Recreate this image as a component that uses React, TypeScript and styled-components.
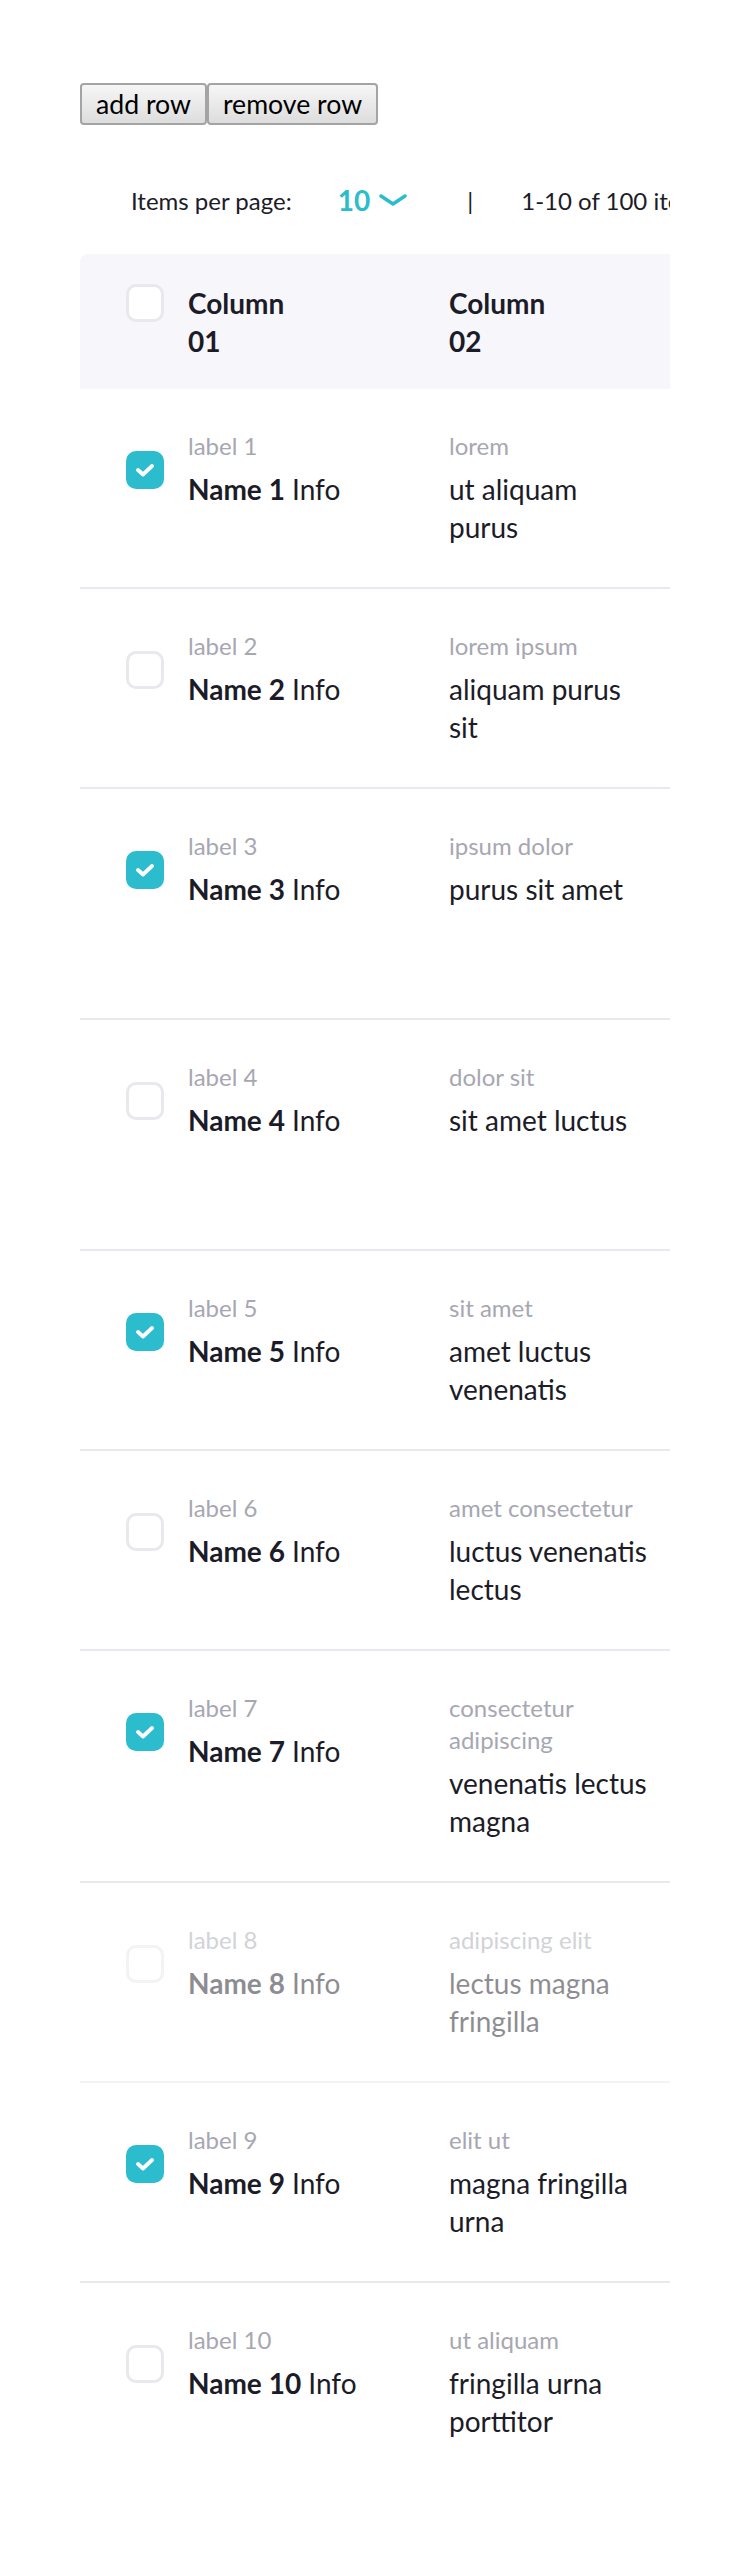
import React from "react";
import styled, { createGlobalStyle, css } from "styled-components";

const GlobalStyle = createGlobalStyle`
  html, body {
    margin: 0;
    padding: 0;
    background: #ffffff;
  }
  body {
    font-family: Lato, "Open Sans", sans-serif;
    color: #1c1c28;
  }
`;

const Page = styled.div`
  padding: 83px 80px 40px;
`;

const Actions = styled.div`
  display: flex;
`;

const ActionButton = styled.button`
  font-family: inherit;
  font-size: 26.67px;
  line-height: 32px;
  color: #000;
  padding: 3px 14px;
  border: 2px solid #a4a4a4;
  border-radius: 4px;
  background: linear-gradient(#f6f6f6, #dddddd);
  cursor: pointer;
`;

const Frame = styled.div`
  overflow: hidden;
`;

const Pager = styled.div`
  display: flex;
  align-items: center;
  height: 60px;
  margin: 45px 0 24px;
  padding-left: 51px;
  white-space: nowrap;
  font-size: 24px;
  color: #1c1c28;
`;

const PagerLabel = styled.span`
  margin-right: 46px;
`;

const PageSize = styled.span`
  display: flex;
  align-items: center;
  gap: 9px;
  font-size: 28px;
  font-weight: 700;
  color: #2bbccd;
`;

const Divider = styled.span`
  margin: 0 48px 0 60px;
  color: #1c1c28;
`;

const Table = styled.div`
  width: 900px;
`;

const rowLayout = css`
  display: flex;
  align-items: flex-start;
  box-sizing: border-box;
`;

const HeaderRow = styled.div`
  ${rowLayout};
  background: #f7f7fb;
  border-radius: 8px 8px 0 0;
  padding: 30px 0 29px;
`;

const Row = styled.div<{ $minHeight?: number; $disabled?: boolean }>`
  ${rowLayout};
  padding: 41px 0;
  border-bottom: 2px solid #e8e8ee;
  min-height: ${(p) => (p.$minHeight ? `${p.$minHeight}px` : "0")};
  opacity: ${(p) => (p.$disabled ? 0.5 : 1)};
  &:last-child {
    border-bottom: none;
  }
`;

const CheckCell = styled.div<{ $offset: number }>`
  flex: none;
  padding-left: 46px;
  margin-right: 24px;
  margin-top: ${(p) => p.$offset}px;
`;

const Box = styled.div<{ $checked: boolean }>`
  width: 38px;
  height: 38px;
  box-sizing: border-box;
  border-radius: 10px;
  display: flex;
  align-items: center;
  justify-content: center;
  ${(p) =>
    p.$checked
      ? css`
          background: #2bbccd;
          border: none;
        `
      : css`
          background: #ffffff;
          border: 3px solid #e8e8ed;
        `}
`;

const Cell = styled.div<{ $width: number }>`
  flex: none;
  width: ${(p) => p.$width}px;
  box-sizing: border-box;
`;

const CellInner = styled.div`
  width: 200px;
`;

const HeaderText = styled.div`
  font-size: 28px;
  line-height: 38px;
  font-weight: 700;
  max-width: 110px;
  color: #1c1c28;
`;

const Label = styled.div`
  font-size: 24px;
  line-height: 32px;
  color: #a7a7b2;
  margin-bottom: 8px;
`;

const Value = styled.div`
  font-size: 28px;
  line-height: 38px;
  color: #1c1c28;
`;

const Strong = styled.strong`
  font-weight: 700;
`;

const Chevron = () => (
  <svg width="28" height="12" viewBox="0 0 28 12" fill="none">
    <polyline
      points="2,2 14,10 26,2"
      stroke="#2bbccd"
      strokeWidth="3.5"
      strokeLinecap="round"
      strokeLinejoin="round"
    />
  </svg>
);

const CheckMark = () => (
  <svg width="20" height="14" viewBox="0 0 20 14" fill="none">
    <polyline
      points="3,7 8,11.5 17,3"
      stroke="#ffffff"
      strokeWidth="3.8"
      strokeLinecap="round"
      strokeLinejoin="round"
    />
  </svg>
);

type Item = {
  n: number;
  checked: boolean;
  disabled?: boolean;
  label2: string;
  value2: string;
  label3: string;
  value3: string;
  minHeight?: number;
};

const rows: Item[] = [
  { n: 1, checked: true, label2: "lorem", value2: "ut aliquam purus", label3: "ipsum", value3: "dolor" },
  { n: 2, checked: false, label2: "lorem ipsum", value2: "aliquam purus sit", label3: "dolor", value3: "sit" },
  { n: 3, checked: true, label2: "ipsum dolor", value2: "purus sit amet", label3: "sit", value3: "amet", minHeight: 231 },
  { n: 4, checked: false, label2: "dolor sit", value2: "sit amet luctus", label3: "amet", value3: "luctus", minHeight: 231 },
  { n: 5, checked: true, label2: "sit amet", value2: "amet luctus venenatis", label3: "luctus", value3: "venenatis" },
  { n: 6, checked: false, label2: "amet consectetur", value2: "luctus venenatis lectus", label3: "venenatis", value3: "lectus" },
  { n: 7, checked: true, label2: "consectetur adipiscing", value2: "venenatis lectus magna", label3: "lectus", value3: "magna" },
  { n: 8, checked: false, disabled: true, label2: "adipiscing elit", value2: "lectus magna fringilla", label3: "magna", value3: "fringilla" },
  { n: 9, checked: true, label2: "elit ut", value2: "magna fringilla urna", label3: "fringilla", value3: "urna" },
  { n: 10, checked: false, label2: "ut aliquam", value2: "fringilla urna porttitor", label3: "urna", value3: "porttitor" },
];

export default function App() {
  return (
    <>
      <GlobalStyle />
      <Page>
        <Actions>
          <ActionButton type="button">add row</ActionButton>
          <ActionButton type="button">remove row</ActionButton>
        </Actions>
        <Frame>
          <Pager>
            <PagerLabel>Items per page:</PagerLabel>
            <PageSize>
              10
              <Chevron />
            </PageSize>
            <Divider>|</Divider>
            <span>1-10 of 100 items</span>
          </Pager>
          <Table>
            <HeaderRow>
              <CheckCell $offset={0}>
                <Box $checked={false} />
              </CheckCell>
              <Cell $width={261}>
                <HeaderText>Column 01</HeaderText>
              </Cell>
              <Cell $width={224}>
                <HeaderText>Column 02</HeaderText>
              </Cell>
              <Cell $width={224}>
                <HeaderText>Column 03</HeaderText>
              </Cell>
            </HeaderRow>
            {rows.map((r) => (
              <Row key={r.n} $minHeight={r.minHeight} $disabled={r.disabled}>
                <CheckCell $offset={21}>
                  <Box $checked={r.checked}>{r.checked && <CheckMark />}</Box>
                </CheckCell>
                <Cell $width={261}>
                  <Label>label {r.n}</Label>
                  <Value>
                    <Strong>Name {r.n}</Strong> Info
                  </Value>
                </Cell>
                <Cell $width={224}>
                  <CellInner>
                    <Label>{r.label2}</Label>
                    <Value>{r.value2}</Value>
                  </CellInner>
                </Cell>
                <Cell $width={224}>
                  <CellInner>
                    <Label>{r.label3}</Label>
                    <Value>{r.value3}</Value>
                  </CellInner>
                </Cell>
              </Row>
            ))}
          </Table>
        </Frame>
      </Page>
    </>
  );
}
